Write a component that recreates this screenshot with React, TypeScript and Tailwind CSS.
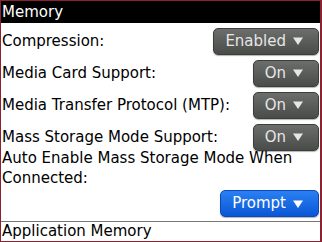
import { ReactNode } from 'react';

const font = { fontFamily: '"DejaVu Sans", sans-serif' };

function Arrow() {
  return (
    <svg width="10" height="8" viewBox="0 0 10 8" className="shrink-0">
      <polygon points="0,0.5 10,0.5 5,8" fill="currentColor" />
    </svg>
  );
}

function Drop({ label, blue }: { label: string; blue?: boolean }) {
  return (
    <span
      className={
        blue
          ? 'flex h-[27px] items-center gap-[7px] rounded-[5px] border border-[#0c48b8] bg-gradient-to-b from-[#2a80f2] to-[#0a56d6] pl-[11px] pr-[15px] text-white shadow-[0_1px_1px_rgba(0,0,0,0.3)]'
          : 'flex h-[27px] items-center gap-[7px] rounded-[5px] border border-[#3c3e3c] bg-gradient-to-b from-[#6c6e6c] to-[#4a4c4a] pl-[11px] pr-[15px] text-[#e6e6e6] shadow-[0_1px_1px_rgba(0,0,0,0.3)]'
      }
    >
      {label}
      <Arrow />
    </span>
  );
}

function Row({ label, children }: { label: string; children: ReactNode }) {
  return (
    <div className="flex h-[32px] items-center justify-between pl-[1px]">
      <span>{label}</span>
      {children}
    </div>
  );
}

export default function App() {
  return (
    <div style={font} className="flex h-[242px] w-[322px] flex-col border border-r-2 border-[#8a2232] bg-white text-[15px] text-black">
      <div className="flex h-[22px] shrink-0 items-center bg-black pl-[1px] text-white">Memory</div>
      <div className="flex flex-1 flex-col pr-[1px] pt-[2px]">
        <Row label="Compression:">
          <Drop label="Enabled" />
        </Row>
        <Row label="Media Card Support:">
          <Drop label="On" />
        </Row>
        <Row label="Media Transfer Protocol (MTP):">
          <Drop label="On" />
        </Row>
        <Row label="Mass Storage Mode Support:">
          <Drop label="On" />
        </Row>
        <div className="mt-[-5px] pl-[1px] leading-[20px]">
          Auto Enable Mass Storage Mode When
          <br />
          Connected:
        </div>
        <div className="mt-[2px] flex justify-end">
          <Drop label="Prompt" blue />
        </div>
      </div>
      <div className="h-[20px] shrink-0 border-t border-[#777] pl-[1px] leading-[19px]">Application Memory</div>
    </div>
  );
}
